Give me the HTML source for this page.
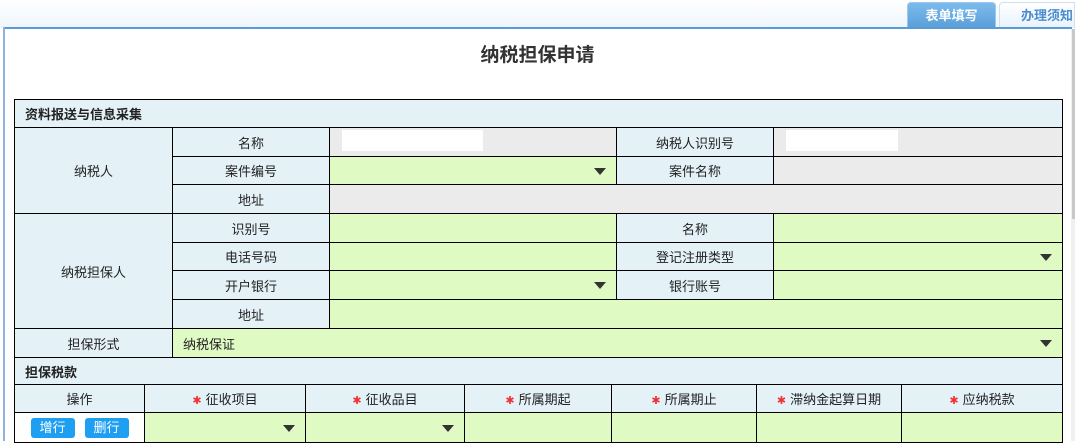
<!DOCTYPE html>
<html><head><meta charset="utf-8"><style>
body{margin:0;width:1075px;height:441px;overflow:hidden;background:#fff;font-family:"Liberation Sans","Noto Sans CJK SC",sans-serif;font-size:13px;color:#222;position:relative}
.topbar{position:absolute;left:0;top:0;width:1075px;height:28px;background:linear-gradient(#fff,#eef5fc)}
.line{position:absolute;left:3px;top:27px;width:1069px;height:2px;background:#5b9bd5}
.lb{position:absolute;left:3px;top:27px;width:2px;height:414px;background:#8db3de}
.tab1{position:absolute;left:907px;top:2px;width:89px;height:26px;background:linear-gradient(#7cbbed,#5a9ed8);border:1px solid #9cc7ee;border-bottom:none;border-radius:4px 4px 0 0;color:#fff;font-weight:bold;text-align:center;line-height:26px;box-sizing:border-box}
.tab2{position:absolute;left:999px;top:2px;width:76px;height:26px;background:linear-gradient(#fff,#e9f2fc);border:1px solid #cfe0f2;border-bottom:none;border-radius:4px 0 0 0;color:#4a8ed0;font-weight:bold;line-height:26px;padding-left:21px;box-sizing:border-box}
.sb{position:absolute;left:1071px;top:29px;width:4px;height:412px;background:#f0f0f0}
.sbt{position:absolute;left:1072px;top:29px;width:3px;height:190px;background:#c8c8c8}
h1{position:absolute;left:0;width:1075px;top:40px;margin:0;text-align:center;font-size:19px;font-weight:bold;color:#333}
table{position:absolute;left:14px;border-collapse:collapse;table-layout:fixed}
td{border:1px solid #000;padding:0;text-align:center;background:#e4f2f8;white-space:nowrap;overflow:hidden;position:relative}
.g{background:#ebebeb}.v{background:#e0fac4}
.sec{text-align:left;font-weight:bold;padding-left:10px}
.l{text-align:left;padding-left:10px}
.ar{position:absolute;right:10px;top:50%;margin-top:-3px;width:0;height:0;border-left:6px solid transparent;border-right:6px solid transparent;border-top:7px solid #333}
.w{position:absolute;top:2px;background:#fff;height:21px}
.st{color:#e33;font-size:11px;margin-right:4px}
.btn{display:inline-block;background:#1e9ff2;color:#fff;border-radius:3px;width:44px;height:20px;line-height:20px;margin:0 5px}
td.o{background:#fff}
</style></head><body>
<div class="topbar"></div>
<div class="tab1">表单填写</div><div class="tab2">办理须知</div>
<div class="line"></div><div class="lb"></div>
<div class="sb"></div><div class="sbt"></div>
<h1>纳税担保申请</h1>
<table style="top:99px;width:1048px">
<col style="width:158px"><col style="width:157px"><col style="width:287px"><col style="width:157px"><col style="width:289px">
<tr style="height:28px"><td colspan="5" class="sec">资料报送与信息采集</td></tr>
<tr style="height:29px"><td rowspan="3">纳税人</td><td>名称</td><td class="g l"><span class="w" style="left:12px;width:141px"></span></td><td>纳税人识别号</td><td class="g l"><span class="w" style="left:12px;width:112px"></span></td></tr>
<tr style="height:28px"><td>案件编号</td><td class="v"><span class="ar"></span></td><td>案件名称</td><td class="g"></td></tr>
<tr style="height:29px"><td>地址</td><td colspan="3" class="g"></td></tr>
<tr style="height:29px"><td rowspan="4">纳税担保人</td><td>识别号</td><td class="v"></td><td>名称</td><td class="v"></td></tr>
<tr style="height:28px"><td>电话号码</td><td class="v"></td><td>登记注册类型</td><td class="v"><span class="ar"></span></td></tr>
<tr style="height:29px"><td>开户银行</td><td class="v"><span class="ar"></span></td><td>银行账号</td><td class="v"></td></tr>
<tr style="height:29px"><td>地址</td><td colspan="3" class="v"></td></tr>
<tr style="height:29px"><td>担保形式</td><td colspan="4" class="v l">纳税保证<span class="ar"></span></td></tr>
<tr style="height:27px"><td colspan="5" class="sec">担保税款</td></tr>
</table>
<table style="top:384px;width:1048px">
<col style="width:130px"><col style="width:161px"><col style="width:159px"><col style="width:147px"><col style="width:145px"><col style="width:145px"><col style="width:161px">
<tr style="height:28px"><td>操作</td><td><span class="st">✱</span>征收项目</td><td><span class="st">✱</span>征收品目</td><td><span class="st">✱</span>所属期起</td><td><span class="st">✱</span>所属期止</td><td><span class="st">✱</span>滞纳金起算日期</td><td><span class="st">✱</span>应纳税款</td></tr>
<tr style="height:30px"><td class="o"><span class="btn">增行</span><span class="btn">删行</span></td><td class="v"><span class="ar"></span></td><td class="v"><span class="ar"></span></td><td class="v"></td><td class="v"></td><td class="v"></td><td class="v"></td></tr>
</table>
</body></html>
